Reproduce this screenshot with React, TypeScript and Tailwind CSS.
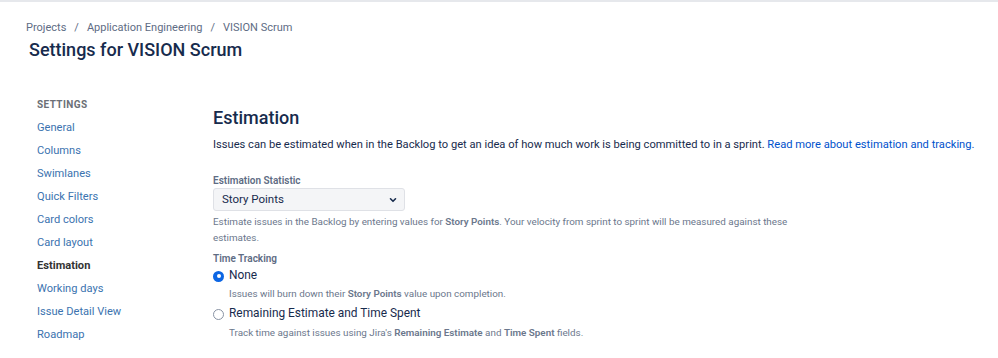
import React from "react";

const navItems = [
  "General",
  "Columns",
  "Swimlanes",
  "Quick Filters",
  "Card colors",
  "Card layout",
  "Estimation",
  "Working days",
  "Issue Detail View",
  "Roadmap",
];

export default function App() {
  return (
    <div
      className="w-[998px] h-[358px] overflow-hidden bg-white border-t-2 border-[#e6e8ec]"
      style={{ fontFamily: "Roboto, 'Noto Sans', sans-serif" }}
    >
      <div className="pl-[26px] pt-[17px]">
        <div className="flex items-center text-[11px] leading-[18px] text-[#5e6c84] gap-[8px]">
          <span>Projects</span>
          <span>/</span>
          <span>Application Engineering</span>
          <span>/</span>
          <span>VISION Scrum</span>
        </div>
        <h1 className="mt-[1px] ml-[3px] text-[18px] leading-[24px] font-medium text-[#172b4d]">
          Settings for VISION Scrum
        </h1>
      </div>
      <div className="flex mt-[34px]">
        <div className="w-[213px] pl-[37px] shrink-0">
          <div className="text-[10px] leading-[14px] font-bold tracking-[0.04em] text-[#6b6f76] mt-[2px]">
            SETTINGS
          </div>
          <ul className="mt-[4px]">
            {navItems.map((n) => (
              <li
                key={n}
                className={
                  n === "Estimation"
                    ? "text-[11.1px] leading-[23px] font-bold text-[#333333]"
                    : "text-[11.1px] leading-[23px] text-[#3b73af]"
                }
              >
                {n}
              </li>
            ))}
          </ul>
        </div>
        <div className="flex-1">
          <h2 className="text-[18px] leading-[24px] font-medium text-[#172b4d] mt-[10px]">Estimation</h2>
          <p className="text-[11.15px] leading-[18px] text-[#172b4d] mt-[6px] whitespace-nowrap">
            Issues can be estimated when in the Backlog to get an idea of how much work is being committed to in a
            sprint. <span className="text-[#0052cc]">Read more about estimation and tracking.</span>
          </p>
          <div className="mt-[20px] text-[10px] leading-[14px] font-semibold text-[#5e6c84]">Estimation Statistic</div>
          <div className="mt-0 w-[192px] h-[23px] rounded-[3px] bg-[#f4f5f7] border border-[#dfe1e6] flex items-center justify-between pl-[8px] pr-[6px]">
            <span className="text-[11.5px] text-[#172b4d]">Story Points</span>
            <svg width="10" height="10" viewBox="0 0 10 10">
              <path d="M2.5 3.8 L5 6.3 L7.5 3.8" fill="none" stroke="#172b4d" strokeWidth="1.6" strokeLinecap="round" strokeLinejoin="round" />
            </svg>
          </div>
          <div className="mt-[3px] w-[585px] text-[9.85px] leading-[16px] text-[#6b778c]">
            <div>
              Estimate issues in the Backlog by entering values for <span className="font-semibold">Story Points</span>.
              Your velocity from sprint to sprint will be measured against these
            </div>
            <div>estimates.</div>
          </div>
          <div className="mt-[6px] text-[10px] leading-[14px] font-semibold text-[#5e6c84]">Time Tracking</div>
          <div className="mt-[1px] flex items-center gap-[5px] h-[18px]">
            <span className="w-[11px] h-[11px] rounded-full bg-[#0c66e4] flex items-center justify-center">
              <span className="w-[4px] h-[4px] rounded-full bg-white" />
            </span>
            <span className="text-[11.9px] text-[#172b4d]">None</span>
          </div>
          <p className="ml-[16px] mt-[1px] text-[9.85px] leading-[16px] text-[#6b778c]">
            Issues will burn down their <span className="font-semibold">Story Points</span> value upon completion.
          </p>
          <div className="mt-[3px] flex items-center gap-[5px] h-[18px]">
            <span className="w-[11px] h-[11px] rounded-full border border-[#8993a4] bg-white" />
            <span className="text-[11.9px] text-[#172b4d]">Remaining Estimate and Time Spent</span>
          </div>
          <p className="ml-[16px] mt-[2px] text-[9.85px] leading-[16px] text-[#6b778c]">
            Track time against issues using Jira's <span className="font-semibold">Remaining Estimate</span> and{" "}
            <span className="font-semibold">Time Spent</span> fields.
          </p>
        </div>
      </div>
    </div>
  );
}
